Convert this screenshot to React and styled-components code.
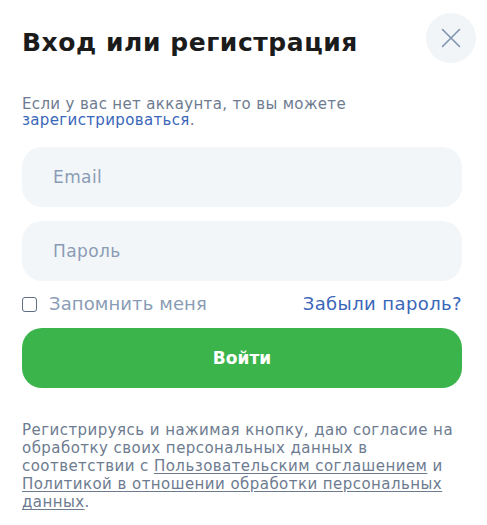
import React from "react";
import styled, { createGlobalStyle } from "styled-components";

const Global = createGlobalStyle`
  html, body { margin: 0; padding: 0; background: #ffffff; }
  * { box-sizing: border-box; }
  body { font-family: "DejaVu Sans", "Noto Sans", sans-serif; }
`;

const Modal = styled.div`
  width: 487px;
  min-height: 525px;
  background: #fff;
  padding: 13px 11px 0 22px;
  display: flex;
  flex-direction: column;
`;

const Header = styled.div`
  display: flex;
  align-items: center;
  justify-content: space-between;
  height: 50px;
`;

const Title = styled.h1`
  margin: 8px 0 0;
  font-size: 25px;
  font-weight: 700;
  letter-spacing: 0.55px;
  color: #1b1b1b;
`;

const CloseButton = styled.button`
  width: 50px;
  height: 50px;
  border-radius: 50%;
  border: none;
  background: #f1f5f7;
  display: flex;
  align-items: center;
  justify-content: center;
  padding: 0;
  cursor: pointer;
`;

const Lead = styled.p`
  margin: 33px 0 0;
  font-size: 15px;
  line-height: 16px;
  letter-spacing: 0.35px;
  color: #6d7b90;
`;

const Link = styled.a`
  color: #3a66b9;
  text-decoration: none;
`;

const Form = styled.div`
  margin-top: 19px;
  display: flex;
  flex-direction: column;
  gap: 14px;
`;

const Input = styled.input`
  width: 440px;
  height: 60px;
  border: none;
  border-radius: 20px;
  background: #f3f6f8;
  padding: 0 31px;
  font-family: inherit;
  font-size: 17px;
  letter-spacing: 0.4px;
  color: #222;
  outline: none;
  &::placeholder { color: #8a9cb5; }
`;

const OptionsRow = styled.div`
  width: 440px;
  display: flex;
  align-items: center;
  justify-content: space-between;
  margin-top: 7px;
  height: 30px;
`;

const RememberLabel = styled.label`
  display: flex;
  align-items: center;
  gap: 12px;
  font-size: 18px;
  letter-spacing: 0.1px;
  color: #8a9cb5;
`;

const Box = styled.span`
  width: 15px;
  height: 15px;
  border: 1.5px solid #5f6e84;
  border-radius: 3px;
  display: inline-block;
  margin-top: 3px;
`;

const Forgot = styled.a`
  font-size: 18px;
  letter-spacing: 0.4px;
  color: #3a66b9;
  text-decoration: none;
`;

const Submit = styled.button`
  width: 440px;
  height: 60px;
  margin-top: 10px;
  border: none;
  border-radius: 20px;
  background: #3bb54b;
  color: #fff;
  font-family: inherit;
  font-size: 17px;
  font-weight: 700;
  cursor: pointer;
`;

const Legal = styled.p`
  margin: 33px 0 0;
  width: 442px;
  font-size: 15px;
  line-height: 18px;
  letter-spacing: 0.45px;
  color: #6d7b90;
`;

const LegalLink = styled.a`
  color: #6d7b90;
  text-decoration: underline;
  text-underline-offset: 2px;
`;

export default function App() {
  return (
    <>
      <Global />
      <Modal>
        <Header>
          <Title>Вход или регистрация</Title>
          <CloseButton aria-label="Закрыть">
            <svg width="20" height="20" viewBox="0 0 20 20">
              <path d="M1.5 1.5 L18.5 18.5 M18.5 1.5 L1.5 18.5" stroke="#7f93ae" strokeWidth="1.6" strokeLinecap="round" />
            </svg>
          </CloseButton>
        </Header>
        <Lead>
          Если у вас нет аккаунта, то вы можете
          <br />
          <Link href="#">зарегистрироваться</Link>.
        </Lead>
        <Form>
          <Input placeholder="Email" />
          <Input placeholder="Пароль" type="password" />
        </Form>
        <OptionsRow>
          <RememberLabel>
            <Box />
            Запомнить меня
          </RememberLabel>
          <Forgot href="#">Забыли пароль?</Forgot>
        </OptionsRow>
        <Submit>Войти</Submit>
        <Legal>
          Регистрируясь и нажимая кнопку, даю согласие на обработку своих персональных данных в соответствии с{" "}
          <LegalLink href="#">Пользовательским соглашением</LegalLink> и{" "}
          <LegalLink href="#">Политикой в отношении обработки персональных данных</LegalLink>.
        </Legal>
      </Modal>
    </>
  );
}
